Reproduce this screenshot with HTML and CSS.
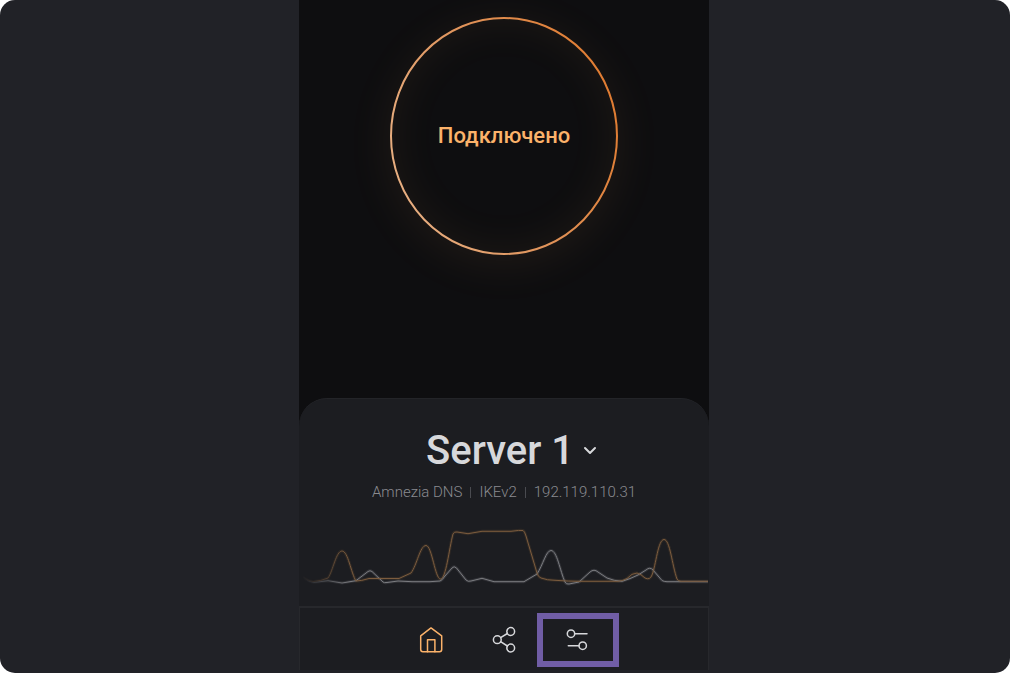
FILE: index.html
```html
<!DOCTYPE html>
<html lang="ru">
<head>
<meta charset="utf-8">
<meta name="viewport" content="width=device-width, initial-scale=1">
<title>Server 1</title>
<link rel="stylesheet" href="styles.css">
</head>
<body>
<div class="backdrop">
  <main class="app">
    <section class="status">
      <button class="connect" type="button">
        <svg class="connect-ring" viewBox="0 0 228 238" fill="none" aria-hidden="true">
          <defs>
            <linearGradient id="ring" x1="0" y1="0.7" x2="1" y2="0.3">
              <stop offset="0" stop-color="#e8b083"/>
              <stop offset="0.5" stop-color="#e0935a"/>
              <stop offset="1" stop-color="#e07b30"/>
            </linearGradient>
          </defs>
          <ellipse cx="114" cy="119" rx="113" ry="118" stroke="url(#ring)" stroke-width="2"/>
        </svg>
        <span class="connect-label">Подключено</span>
      </button>
    </section>

    <section class="sheet">
      <button class="server" type="button">
        <span>Server 1</span>
        <svg class="chevron" viewBox="0 0 24 24" fill="none" aria-hidden="true">
          <path d="M7 9L12 14L17 9"/>
        </svg>
      </button>
      <ul class="details">
        <li>Amnezia DNS</li>
        <li>IKEv2</li>
        <li>192.119.110.31</li>
      </ul>
      <svg class="chart" viewBox="0 0 410 80" fill="none" aria-hidden="true">
        <defs>
          <linearGradient id="fadeIn" gradientUnits="userSpaceOnUse" x1="2" y1="0" x2="50" y2="0">
            <stop offset="0" stop-color="#fff" stop-opacity="0"/>
            <stop offset="1" stop-color="#fff"/>
          </linearGradient>
          <mask id="fade" maskUnits="userSpaceOnUse" x="0" y="0" width="410" height="80">
            <rect width="410" height="80" fill="url(#fadeIn)"/>
          </mask>
          <path id="down" d="M4 62Q9 66 14 66.500Q22 66 29 63C34 56 37 36 43 36S52 58 57 66Q62 66 70 63.500H100L112 58C118 50 121 30.500 127 30.500C133 30.500 136 64 141.500 64C147 64 150 34 154 19Q155 16.500 158 17L169 18.700L183 16.300H212Q221 15 224 15.500Q225.500 16 227 21L238 58Q239 62 242 63Q248 65.300 256 65.300Q270 66.300 281 66.300H319Q324 66 328 63.500Q333 58 338 58Q342 59 346 63Q351 65.500 353 60C357 50 359 24.500 365 24.500S373 50 378 64Q379 66.300 382 66.300H409"/>
          <path id="up" d="M4 62Q10 67.500 15 67.500L29 65.700L43 68L57 65.700L69 56.500Q71 55 73 56.500L84 67Q85 68 88 67.500L99 66L113 66.700H131L141 66Q143 65.500 146 61L153 53Q155 50.500 157.500 53L167 65Q169 67 172 66L183 63.300L195 66.700H225L238 59C244 50 247 35.500 252 35.500C258 35.500 261 56 266 67Q267 69.500 270 69L280 67L291 57Q295 53.500 299 57L308 63Q315 66 323 66.300Q331 64 339 60L347 55Q351 51.500 354 55L363 65.500Q365 66.700 368 66.700H409"/>
        </defs>
        <g mask="url(#fade)">
          <use href="#down" class="glow glow-down"/>
          <use href="#up" class="glow glow-up"/>
          <use href="#up" class="line line-up"/>
          <use href="#down" class="line line-down"/>
        </g>
      </svg>
    </section>

    <nav class="tabs">
      <button class="tab tab-active" type="button" aria-label="Главная">
        <svg viewBox="0 0 28 28" aria-hidden="true">
          <path d="M4.700 9.800L15 1.900L25.700 9.800V23.500Q25.700 25.700 23.500 25.700H6.900Q4.700 25.700 4.700 23.500Z"/>
          <path d="M11.500 25.700V13.700H18.900V25.700"/>
        </svg>
      </button>
      <button class="tab" type="button" aria-label="Поделиться">
        <svg viewBox="0 0 28 28" aria-hidden="true">
          <circle cx="7.300" cy="13.700" r="3.900"/>
          <circle cx="20.700" cy="5.500" r="3.900"/>
          <circle cx="20.700" cy="22" r="3.900"/>
          <path d="M10.600 11.700L17.400 7.500M10.600 15.700L17.400 20"/>
        </svg>
      </button>
      <button class="tab tab-marked" type="button" aria-label="Настройки">
        <svg viewBox="0 0 28 28" aria-hidden="true">
          <circle cx="7" cy="7.700" r="3.700"/>
          <circle cx="18.700" cy="19.700" r="3.700"/>
          <path d="M10.700 7.700H23M4.300 19.700H15"/>
        </svg>
      </button>
    </nav>
  </main>
</div>
</body>
</html>
```
FILE: styles.css
```css
* {
  box-sizing: border-box;
}

body {
  margin: 0;
  background: #fff;
  font-family: Roboto, "Noto Sans", sans-serif;
}

button {
  padding: 0;
  border: 0;
  background: none;
  color: inherit;
  font: inherit;
  cursor: pointer;
}

.backdrop {
  display: flex;
  justify-content: center;
  min-height: 100vh;
  padding: 0 16px 3px 14px;
  border-radius: 15px;
  background: #212227;
}

.app {
  display: flex;
  flex-direction: column;
  width: 100%;
  max-width: 410px;
  background: #0e0e10;
}

.status {
  display: flex;
  flex: 1;
  justify-content: center;
  align-items: flex-start;
  padding: 17px 16px 143px;
}

.connect {
  display: grid;
  place-items: center;
  border-radius: 50%;
  box-shadow: 0 8px 48px rgba(251, 178, 106, 0.08), inset 0 0 48px rgba(251, 178, 106, 0.07);
}

.connect-ring,
.connect-label {
  grid-area: 1 / 1;
}

.connect-ring {
  width: 228px;
  height: 238px;
}

.connect-label {
  color: #fbb26a;
  font-size: 22px;
  font-weight: 500;
  line-height: 28px;
}

.sheet {
  display: flex;
  flex-direction: column;
  align-items: center;
  padding-top: 28px;
  border-top: 1px solid #232428;
  border-radius: 28px 28px 0 0;
  background: #1c1d21;
}

.server {
  display: flex;
  align-items: center;
  gap: 4px;
  padding-left: 20px;
  color: #d7d8db;
  font-size: 40px;
  font-weight: 500;
  line-height: 48px;
}

.chevron {
  width: 24px;
  height: 24px;
  stroke: #d7d8db;
  stroke-width: 2;
  stroke-linecap: round;
  stroke-linejoin: round;
}

.details {
  display: flex;
  margin: 9px 0 0;
  padding: 0;
  list-style: none;
  color: #8a8b90;
  font-size: 15px;
  font-weight: 300;
  line-height: 16px;
}

.details li {
  display: flex;
  align-items: center;
}

.details li + li::before {
  width: 1px;
  height: 11px;
  margin: 0 8px;
  background: #4a4b50;
  content: "";
}

.chart {
  width: 100%;
  margin: 15px 0 11px;
}

.line {
  stroke-width: 1;
}

.line-down {
  stroke: #7c5c3e;
}

.line-up {
  stroke: #7c7d81;
}

.glow {
  stroke-width: 3;
  stroke-opacity: 0.12;
}

.glow-down {
  stroke: #c08040;
}

.glow-up {
  stroke: #c8c9cc;
}

.tabs {
  display: flex;
  justify-content: center;
  padding: 5px 0 3px;
  border: 1px solid #27282c;
  border-top-width: 2px;
  border-bottom: 0;
  background: #1c1d21;
}

.tab {
  position: relative;
  display: grid;
  place-items: center;
  width: 74px;
  height: 54px;
  color: #d7d8db;
}

.tab svg {
  width: 28px;
  height: 28px;
  fill: none;
  stroke: currentColor;
  stroke-width: 1.5;
  stroke-linecap: round;
  stroke-linejoin: round;
}

.tab-active {
  color: #fbb26a;
}

.tab-marked::after {
  position: absolute;
  inset: 0 -4px;
  border: 6px solid #705da5;
  content: "";
}
```
